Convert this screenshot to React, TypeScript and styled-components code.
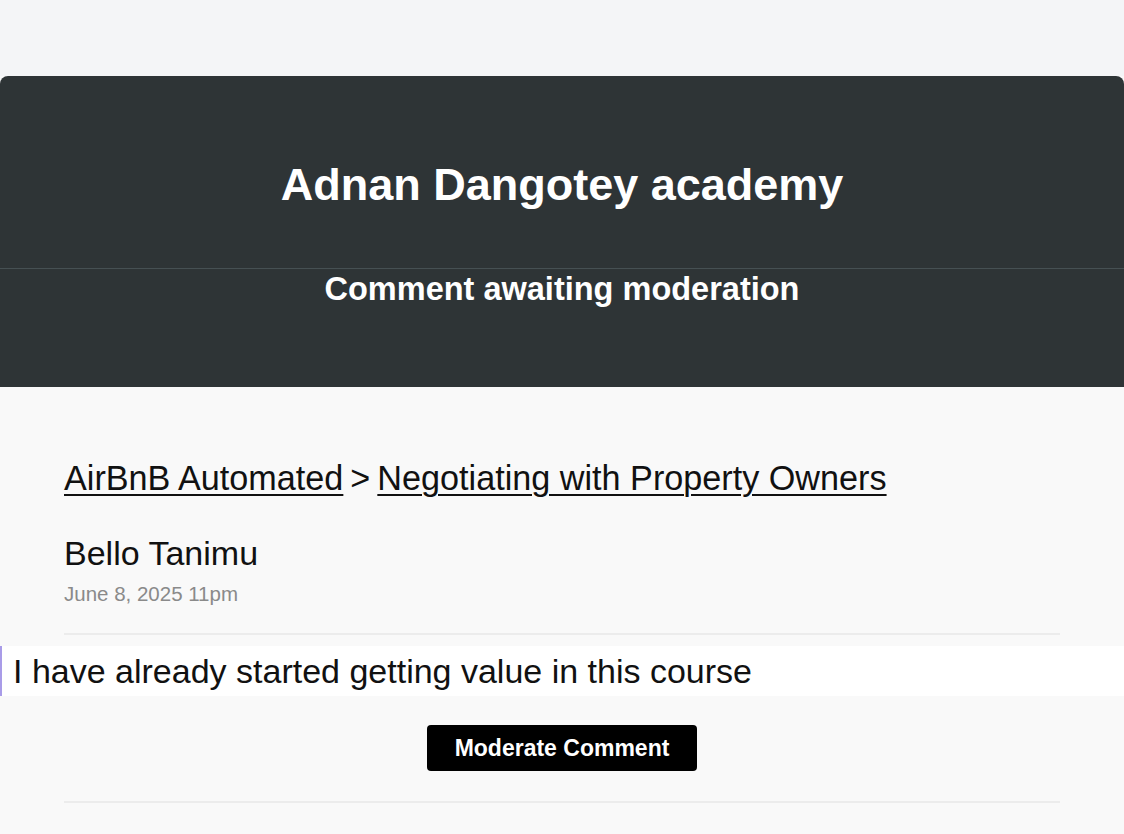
import React from "react";
import styled, { createGlobalStyle } from "styled-components";

const Global = createGlobalStyle`
  html, body {
    margin: 0;
    padding: 0;
    background: #f9f9f9;
  }
  body {
    font-family: "Liberation Sans", Arial, Helvetica, sans-serif;
    color: #111;
  }
`;

const Page = styled.div`
  min-height: 834px;
  background: #f9f9f9;
  display: flex;
  flex-direction: column;
`;

const TopStrip = styled.div`
  height: 76px;
  background: #f4f5f7;
`;

const Header = styled.header`
  background: #2e3436;
  border-radius: 8px 8px 0 0;
  padding: 84px 0 80px;
  display: flex;
  flex-direction: column;
  align-items: center;
  color: #fff;
`;

const Title = styled.h1`
  margin: 0;
  font-size: 45px;
  line-height: 50px;
  font-weight: 700;
  text-align: center;
`;

const HeaderRule = styled.div`
  align-self: stretch;
  height: 1px;
  background: #465053;
  margin: 58px 0 2px;
`;

const Subtitle = styled.h2`
  margin: 0;
  font-size: 32.5px;
  line-height: 36px;
  font-weight: 700;
  text-align: center;
`;

const Body = styled.main`
  padding: 72px 0 0;
  display: flex;
  flex-direction: column;
`;

const Inset = styled.div`
  padding: 0 64px;
  display: flex;
  flex-direction: column;
`;

const Crumbs = styled.nav`
  font-size: 34.2px;
  line-height: 38px;
  color: #111;
  display: flex;
  align-items: baseline;
  gap: 7px;
`;

const Crumb = styled.a`
  color: #111;
  text-decoration: underline;
  text-decoration-thickness: 2px;
  text-underline-offset: 4px;
`;

const Sep = styled.span`
  color: #111;
`;

const Author = styled.div`
  margin-top: 37px;
  font-size: 34px;
  line-height: 38px;
  color: #111;
`;

const DateLine = styled.div`
  margin-top: 11px;
  font-size: 20.5px;
  line-height: 22px;
  color: #8a8a8a;
`;

const Rule = styled.hr<{ $top: number }>`
  border: none;
  height: 2px;
  background: #ececec;
  margin: ${(p) => p.$top}px 64px 0 64px;
`;

const CommentBand = styled.div`
  margin-top: 11px;
  height: 50px;
  background: #ffffff;
  border-left: 2px solid #a99ce8;
  display: flex;
  align-items: center;
  padding-left: 11px;
  font-size: 34px;
  color: #111;
`;

const ButtonRow = styled.div`
  margin-top: 29px;
  display: flex;
  justify-content: center;
`;

const Button = styled.button`
  width: 270px;
  height: 46px;
  background: #000;
  color: #fff;
  border: none;
  border-radius: 4px;
  font-family: "Liberation Sans", Arial, sans-serif;
  font-weight: 700;
  font-size: 23px;
  cursor: pointer;
`;

export default function App() {
  return (
    <Page>
      <Global />
      <TopStrip />
      <Header>
        <Title>Adnan Dangotey academy</Title>
        <HeaderRule />
        <Subtitle>Comment awaiting moderation</Subtitle>
      </Header>
      <Body>
        <Inset>
          <Crumbs>
            <Crumb href="#">AirBnB Automated</Crumb>
            <Sep>&gt;</Sep>
            <Crumb href="#">Negotiating with Property Owners</Crumb>
          </Crumbs>
          <Author>Bello Tanimu</Author>
          <DateLine>June 8, 2025 11pm</DateLine>
        </Inset>
        <Rule $top={28} />
        <CommentBand>I have already started getting value in this course</CommentBand>
        <ButtonRow>
          <Button>Moderate Comment</Button>
        </ButtonRow>
        <Rule $top={30} />
      </Body>
    </Page>
  );
}
